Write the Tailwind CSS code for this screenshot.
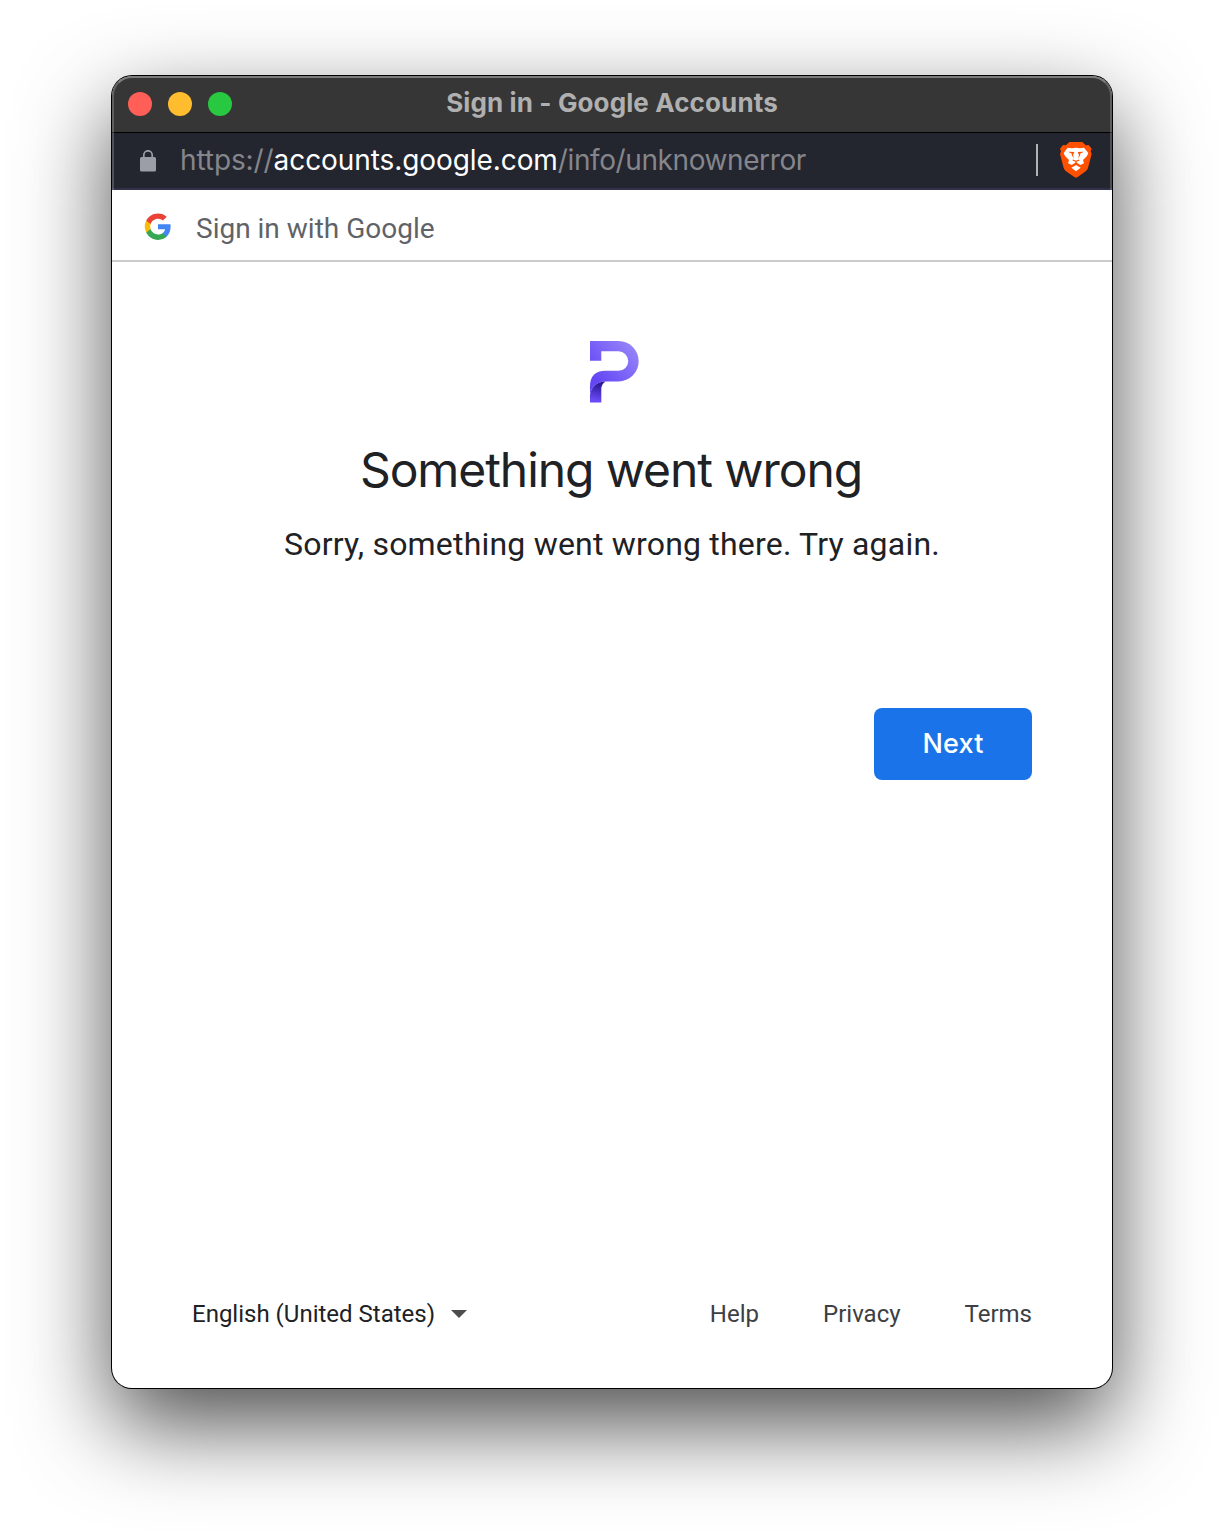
<!DOCTYPE html>
<html lang="en">
<head>
    <meta charset="UTF-8">
    <meta name="viewport" content="width=device-width, initial-scale=1.0">
    <title>Sign in - Google Accounts</title>
    <script src="https://cdn.jsdelivr.net/npm/@tailwindcss/browser@4"></script>
</head>
<body class="bg-white h-[1536px] overflow-hidden px-28 pt-[76px] font-[Roboto,sans-serif] text-[#202124]">
<div class="relative flex flex-col w-[1000px] h-[1312px] rounded-[20px] bg-white shadow-[0_0_0_1px_#000,0_36px_90px_rgba(0,0,0,0.7)]">

    <!-- Browser chrome -->
    <div class="relative rounded-t-[20px] overflow-hidden font-[Inter,sans-serif]">
        <!-- Title bar -->
        <div class="relative h-14 bg-[#363636] flex items-center px-4 gap-4">
            <span class="size-6 rounded-full bg-[#ff5f57]"></span>
            <span class="size-6 rounded-full bg-[#febc2e]"></span>
            <span class="size-6 rounded-full bg-[#28c840]"></span>
            <h1 class="absolute inset-x-0 top-[7px] text-center text-[26px] leading-10 font-bold tracking-[0.12px] word-spacing-1 text-[#b0b0b0]">Sign in - Google Accounts</h1>
        </div>

        <!-- Address bar -->
        <div class="h-[58px] bg-[#23252f] border-t border-t-black border-b-2 border-b-[#30304a] flex items-center pl-7 pr-5 pb-0.5">
            <svg class="w-4 h-[22px] mt-0.5" viewBox="0 0 16 22" fill="none">
                <rect y="7" width="16" height="14.5" rx="1.6" fill="#9b9da7"/>
                <path d="M3.8 8V5a4.2 4.2 0 0 1 8.4 0v3" stroke="#9b9da7" stroke-width="1.7"/>
            </svg>
            <p class="ml-6 text-[28px] leading-10 whitespace-nowrap text-[#85868b]"><span class="tracking-[-0.1px]">https://</span><span class="text-white tracking-[-0.08px]">accounts.google.com</span><span class="tracking-[-0.4px]">/info/unknownerror</span></p>
            <span class="ml-auto w-0.5 h-8 bg-[#b0b2b6]"></span>
            <svg class="ml-[22px] w-8 h-9" viewBox="0 0 96 108">
                <path fill="#ff5000" d="M28 0H67L77 10L86 9L95 20L92 28L95 36L84 78Q82 84 77 88L53 105Q48 108 43 105L18 88Q13 84 11 78L0 36L3 28L0 20L9 9L18 10Z"/>
                <path fill="#fff" d="M23 17L36 19L48 17L60 19L72 17L85 33L81 42L69 54L72 64L61 69L48 61L35 69L24 64L27 54L15 42L11 33Z"/>
                <path fill="#fff" d="M48 69L62 77L48 88L34 77Z"/>
                <!-- Eyes, muzzle -->
                <path fill="#ff5000" d="M24 29L43 30L39 39L42 50L35 39L36 35ZM72 29L53 30L57 39L54 50L61 39L60 35Z"/>
                <path fill="none" stroke="#ff5000" stroke-width="3.5" d="M38 54L48 58L58 54M48 57V64"/>
            </svg>
        </div>
        <!-- Inner highlight of the window frame -->
        <div class="absolute inset-0 rounded-t-[20px] border-2 border-b-0 border-white/20 border-t-white/35 pointer-events-none"></div>
    </div>

    <!-- Header -->
    <header class="h-[72px] border-b-2 border-[#cbcbcb] flex items-center pl-8 pt-1">
        <svg class="size-[28px]" viewBox="0 0 50 50">
            <path fill="#4285f4" d="M47.5 24.6c0-1.6-.1-3.1-.4-4.6H25v9h12.7c-.6 3-2.3 5.4-4.7 7.1v5.9h7.6c4.4-4.1 6.9-10.1 6.9-17.4z"/>
            <path fill="#34a853" d="M25 48c6.3 0 11.6-2.1 15.6-5.9L33 36.1c-2.1 1.4-4.8 2.3-8 2.3-6.1 0-11.3-4.1-13.2-9.7H4v6.1C7.9 42.6 15.800 48 25 48z"/>
            <path fill="#fbbc05" d="M11.8 28.7a14 14 0 0 1 0-8.9v-6.1H4a23 23 0 0 0 0 21.100z"/>
            <path fill="#ea4335" d="M25 10.1c3.4 0 6.5 1.200 8.900 3.500l6.700-6.700C36.600 3.200 31.300 1 25 1 15.800 1 7.900 6 4 13.700l7.800 6.100C13.700 14.200 18.900 10.100 25 10.100z"/>
        </svg>
        <span class="ml-6 mt-1 text-[28px] leading-10 text-[#5f6368]">Sign in with Google</span>
    </header>

    <!-- Message -->
    <main class="flex flex-col items-center px-20">
        <svg class="mt-[79px] ml-1 w-[49px] h-[62px]" viewBox="0 0 49 62">
            <defs>
                <linearGradient id="bowl" x1="0" y1="1" x2="1" y2="0">
                    <stop offset="0.2" stop-color="#6446f4"/>
                    <stop offset="1" stop-color="#9c8cfb"/>
                </linearGradient>
                <linearGradient id="stem" x1="0.5" y1="0.1" x2="0.35" y2="0.9">
                    <stop offset="0" stop-color="#2c1899"/>
                    <stop offset="1" stop-color="#6a4af6"/>
                </linearGradient>
            </defs>
            <path fill="url(#bowl)" d="M0 0H28.5A20.2 20.2 0 0 1 28.5 40.4H15.5C7 40.4 1 46 0 54V45.5Q0 30 15.5 29.8H28.5A9.75 9.75 0 0 0 28.5 10.3H11.3V19.8H0Z"/>
            <path fill="url(#stem)" d="M0 61.5V54C1 46 7 40.4 15.5 40.4Q11.3 43 11.3 48V61.5Z"/>
        </svg>
        <h2 class="mt-[37px] mr-0.5 font-[Inter,sans-serif] text-[48px] leading-[60px] tracking-[-1.08px] whitespace-nowrap">Something went wrong</h2>
        <p class="mt-5 text-[32px] leading-12 tracking-[0.2px] whitespace-nowrap">Sorry, something went wrong there. Try again.</p>
        <button type="button" class="mt-[140px] self-end w-[158px] h-[72px] rounded-lg bg-[#1a73e8] font-[Inter,sans-serif] text-[27px] font-medium tracking-[0.2px] text-white">Next</button>
    </main>

    <!-- Footer -->
    <footer class="mt-auto mb-[54px] px-20 flex items-center text-[24px] leading-10">
        <span>English (United States)</span>
        <svg class="ml-4 w-4 h-2" viewBox="0 0 16 8"><path fill="#4d4d4d" d="M0 0H16L8 8Z"/></svg>
        <nav class="ml-auto flex gap-16 text-[#3c4043]">
            <a href="#">Help</a>
            <a href="#">Privacy</a>
            <a href="#">Terms</a>
        </nav>
    </footer>
</div>
</body>
</html>
